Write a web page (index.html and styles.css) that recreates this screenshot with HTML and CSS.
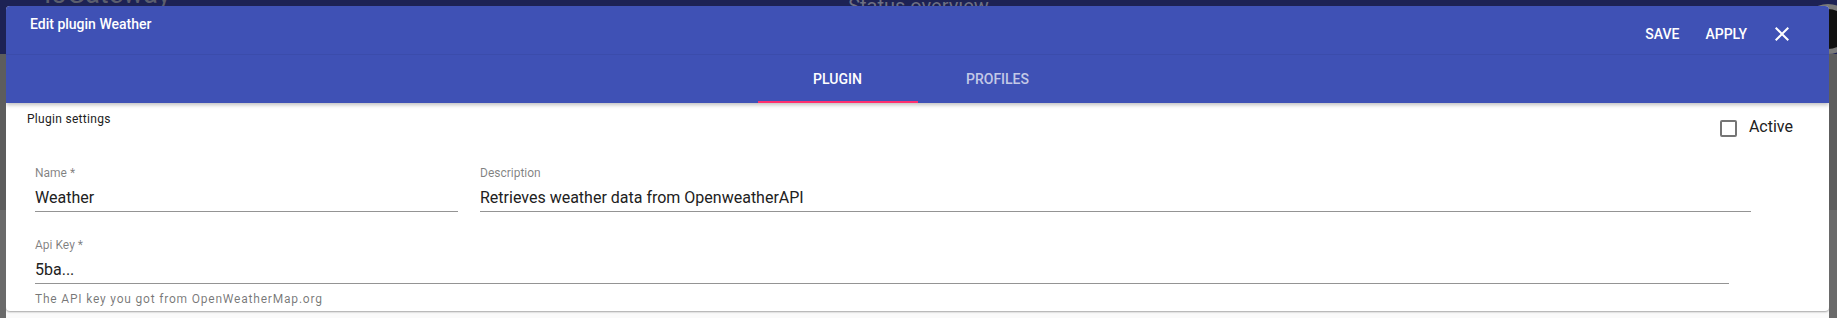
FILE: index.html
```html
<!DOCTYPE html>
<html lang="en">
<head>
    <meta charset="UTF-8">
    <meta name="viewport" content="width=device-width, initial-scale=1.0">
    <title>Edit plugin Weather</title>
    <link rel="stylesheet" href="styles.css">
</head>
<body>

    <!-- page behind the dialog (dimmed by the backdrop) -->
    <header class="app-bar">
        <span class="app-title">IoGateway</span>
        <span class="app-page">Status overview</span>
        <span class="app-avatar"></span>
    </header>

    <div class="dialog">
        <div class="dialog-head">
            <div class="toolbar">
                <h2 class="dialog-title">Edit plugin Weather</h2>
                <div class="toolbar-actions">
                    <button class="text-btn">SAVE</button>
                    <button class="text-btn">APPLY</button>
                    <button class="icon-btn" aria-label="Close">
                        <svg width="24" height="24" viewBox="0 0 24 24"><path fill="#fff" d="M19 6.41L17.59 5 12 10.59 6.41 5 5 6.41 10.59 12 5 17.59 6.41 19 12 13.41 17.59 19 19 17.59 13.41 12z"/></svg>
                    </button>
                </div>
            </div>
            <nav class="tabs">
                <a class="tab active">PLUGIN</a>
                <a class="tab">PROFILES</a>
            </nav>
        </div>

        <section class="card">
            <div class="card-head">
                <span class="card-title">Plugin settings</span>
                <label class="check">
                    <span class="check-box"></span>
                    <span>Active</span>
                </label>
            </div>

            <div class="form">
                <div class="form-row">
                    <div class="field field-name">
                        <div class="field-label">Name *</div>
                        <div class="field-value">Weather</div>
                    </div>
                    <div class="field field-desc">
                        <div class="field-label">Description</div>
                        <div class="field-value">Retrieves weather data from OpenweatherAPI</div>
                    </div>
                </div>
                <div class="field field-key">
                    <div class="field-label">Api Key *</div>
                    <div class="field-value">5ba...</div>
                </div>
                <div class="field-hint">The API key you got from OpenWeatherMap.org</div>
            </div>
        </section>
    </div>

</body>
</html>
```

FILE: styles.css
```css
body {
    font-family: Roboto, "Helvetica Neue", Arial, sans-serif;
    margin: 0;
    height: 318px;
    overflow: hidden;
    background: linear-gradient(#1d2254 0, #1d2254 54px, #5d5d5d 54px, #5d5d5d 210px, #6a6a6a 210px);
}

/* --- page under the backdrop --- */
.app-bar {
    display: grid;
    grid-template-columns: 1fr auto 1fr;
    align-items: start;
    height: 54px;
}
.app-title {
    font-size: 27px;
    line-height: 27px;
    margin: -19px 0 0 44px;
    color: #5b5e6e;
}
.app-page {
    font-size: 20px;
    line-height: 20px;
    margin-top: -4px;
    color: #6d7083;
}
.app-avatar {
    justify-self: end;
    width: 40px;
    height: 40px;
    margin: 4px -16px 0 0;
    border: 5px solid #7a7a7a;
    border-radius: 50%;
    background: #111;
}

/* --- dialog --- */
.dialog {
    position: absolute;
    top: 6px;
    left: 6px;
    width: 1823px;
    bottom: 0;
    background-color: #fafafa;
    border-radius: 4px 4px 0 0;
    overflow: hidden;
}
.dialog-head {
    background-color: #3f51b5;
    color: #fff;
    position: relative;
    z-index: 1;
    box-shadow: 0 2px 4px rgba(0, 0, 0, 0.25);
}
.toolbar {
    display: flex;
    justify-content: space-between;
    align-items: flex-start;
    height: 49px;
    padding: 8px 35px 0 24px;
    box-sizing: border-box;
    border-bottom: 1px solid #3b4cab;
}
.dialog-title {
    margin: 0;
    font-size: 14px;
    line-height: 20px;
    font-weight: 500;
}
.toolbar-actions {
    display: flex;
    align-items: center;
    margin-top: 8px;
}
.text-btn, .icon-btn {
    background: none;
    border: 0;
    padding: 0;
    color: #fff;
    font-family: inherit;
    cursor: pointer;
}
.text-btn {
    font-size: 14px;
    font-weight: 500;
    line-height: 20px;
    margin-left: 26px;
}
.icon-btn {
    display: flex;
    margin-left: 23px;
}
.tabs {
    display: flex;
    justify-content: center;
    height: 48px;
}
.tab {
    width: 160px;
    display: flex;
    align-items: center;
    justify-content: center;
    font-size: 14px;
    font-weight: 500;
    color: rgba(255, 255, 255, 0.7);
    box-sizing: border-box;
    border-bottom: 2px solid transparent;
    padding-top: 2px;
}
.tab.active {
    color: #fff;
    border-bottom-color: #ff2f6e;
}

/* --- settings card --- */
.card {
    background-color: #fff;
    height: 208px;
    box-sizing: border-box;
    padding: 8px 36px 0 21px;
    border-radius: 0 0 4px 4px;
    box-shadow: 0 1px 2px rgba(0, 0, 0, 0.35);
}
.card-head {
    display: flex;
    justify-content: space-between;
    align-items: flex-start;
}
.card-title {
    font-size: 12px;
    line-height: 16px;
    letter-spacing: 0.3px;
    color: #212121;
}
.check {
    display: flex;
    align-items: center;
    gap: 12px;
    margin-top: 5px;
    font-size: 16px;
    line-height: 22px;
    color: #212121;
}
.check-box {
    width: 13px;
    height: 13px;
    border: 2px solid #757575;
    border-radius: 2px;
    margin-top: 2px;
}
.form {
    padding: 27px 0 0 8px;
}
.form-row {
    display: flex;
    gap: 22px;
    margin-bottom: 25px;
}
.field-name {
    width: 423px;
}
.field-desc {
    width: 1271px;
}
.field-key {
    width: 1694px;
}
.field-label {
    font-size: 12px;
    line-height: 16px;
    color: rgba(0, 0, 0, 0.5);
    margin-bottom: 7px;
}
.field-value {
    font-size: 16px;
    line-height: 20px;
    color: #212121;
    padding-bottom: 3px;
    border-bottom: 1px solid #949494;
}
.field-hint {
    font-size: 12px;
    line-height: 16px;
    letter-spacing: 0.8px;
    margin-top: 7px;
    color: rgba(0, 0, 0, 0.54);
}
```
